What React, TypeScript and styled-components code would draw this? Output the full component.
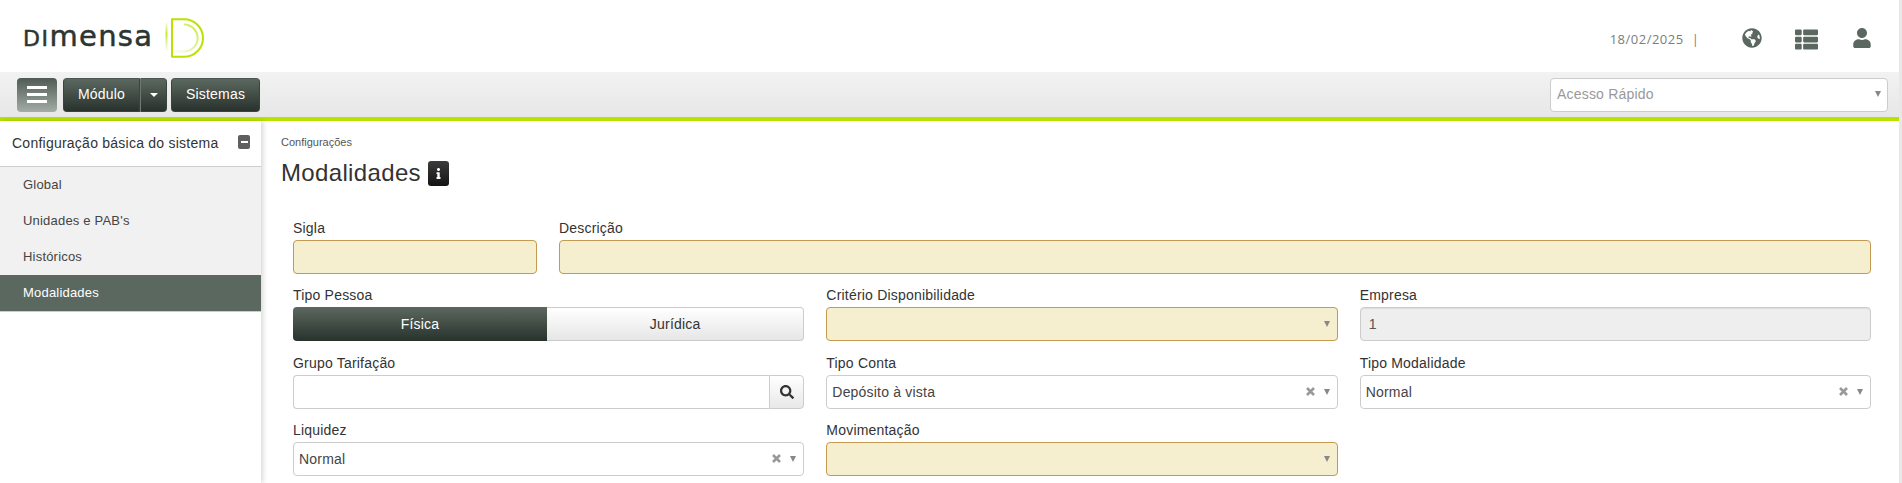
import React from "react";
import styled, { createGlobalStyle } from "styled-components";
import { FaGlobeAmericas, FaThList, FaUser, FaSearch, FaInfo } from "react-icons/fa";

const Global = createGlobalStyle`
  html, body { margin: 0; padding: 0; height: 483px; overflow: hidden; background: #fff; }
  * { box-sizing: border-box; }
  body { font-family: "Liberation Sans", Arial, sans-serif; font-size: 14px; color: #333; letter-spacing: 0.2px; }
`;

const Shell = styled.div`
  display: flex;
  height: 483px;
  overflow: hidden;
`;
const Page = styled.div`
  flex: 1;
  min-width: 0;
  display: flex;
  flex-direction: column;
`;
const ScrollTrack = styled.div`
  width: 3px;
  background: #e8e8e8;
`;

const Header = styled.header`
  height: 72px;
  flex: none;
  display: flex;
  align-items: center;
  justify-content: space-between;
  padding: 0 10px 0 23px;
  background: #fff;
`;
const Brand = styled.div`
  display: flex;
  align-items: center;
  gap: 12px;
  margin-top: 3px;
`;
const Wordmark = styled.div`
  font-family: "DejaVu Sans", sans-serif;
  font-size: 29px;
  line-height: 30px;
  color: #2d3531;
  letter-spacing: 1.3px;
  -webkit-text-stroke: 0.5px #2d3531;
  white-space: nowrap;
`;
const WordCaps = styled.span`
  font-size: 22px;
  letter-spacing: 1.5px;
`;
const HeaderRight = styled.div`
  display: flex;
  align-items: center;
  padding-top: 5px;
`;
const DateText = styled.span`
  font-family: "Open Sans", sans-serif;
  font-size: 13px;
  color: #78807b;
  letter-spacing: 0.5px;
`;
const Pipe = styled.span`
  font-family: "Open Sans", sans-serif;
  font-size: 13px;
  color: #78807b;
  margin: 0 0 0 8px;
`;
const IconSlot = styled.span`
  width: 55px;
  display: flex;
  justify-content: center;
  color: #5b685f;
  font-size: ${(p: { $size: number }) => p.$size}px;
  margin-top: 1px;
`;
const IconRow = styled.div`
  display: flex;
  margin-left: 25px;
`;

const Toolbar = styled.div`
  height: 45px;
  flex: none;
  display: flex;
  align-items: center;
  padding: 0 11px 0 17px;
  background: linear-gradient(#f2f2f2, #e7e7e7);
`;
const Hamburger = styled.button`
  width: 40px;
  height: 34px;
  padding: 0;
  border: 0;
  border-radius: 4px;
  background: linear-gradient(#4e5b53, #a3ada6);
  display: flex;
  flex-direction: column;
  align-items: center;
  justify-content: center;
  gap: 4px;
  margin-right: 6px;
`;
const BurgerBar = styled.span`
  width: 20px;
  height: 3px;
  background: #fff;
`;
const DarkButton = styled.button`
  height: 34px;
  border: 1px solid #3a433e;
  border-top-color: #4b5750;
  background: linear-gradient(#5b685f, #29322d);
  color: #fff;
  font: 14px "Liberation Sans", Arial, sans-serif;
  letter-spacing: 0.2px;
  padding: 0 0 2px;
  width: ${(p: { $w: number; $side?: string }) => p.$w}px;
  border-radius: ${(p: { $w: number; $side?: string }) =>
    p.$side === "left" ? "4px 0 0 4px" : p.$side === "right" ? "0 4px 4px 0" : "4px"};
  border-left-color: ${(p: { $w: number; $side?: string }) => (p.$side === "right" ? "#6d7a71" : "#3a433e")};
`;
const ButtonGroup = styled.div`
  display: flex;
  margin-right: 4px;
`;
const Caret = styled.span`
  display: inline-block;
  width: 0;
  height: 0;
  border-left: 4px solid transparent;
  border-right: 4px solid transparent;
  border-top: 4px solid #fff;
  vertical-align: middle;
`;
const QuickAccess = styled.div`
  margin-left: auto;
  width: 338px;
  height: 34px;
  border: 1px solid #ccc;
  border-radius: 4px;
  background: #fff;
  color: #999;
  display: flex;
  align-items: center;
  justify-content: space-between;
  padding: 0 6px 2px 6px;
`;
const Arrow = styled.span`
  width: 0;
  height: 0;
  flex: none;
  border-left: 3.5px solid transparent;
  border-right: 3.5px solid transparent;
  border-top: 6px solid #888;
`;
const GreenLine = styled.div`
  height: 4px;
  flex: none;
  background: #b9e200;
`;

const Body = styled.div`
  flex: 1;
  min-height: 0;
  display: flex;
`;
const Sidebar = styled.aside`
  width: 261px;
  flex: none;
  box-shadow: 2px 0 5px rgba(0, 0, 0, 0.16);
  position: relative;
  background: #fff;
`;
const SideTitle = styled.div`
  height: 46px;
  display: flex;
  align-items: center;
  justify-content: space-between;
  padding: 0 11px 1px 12px;
  border-bottom: 1px solid #ccc;
  font-size: 14px;
  color: #333;
  letter-spacing: 0.24px;
`;
const Collapse = styled.span`
  width: 12px;
  height: 14px;
  margin-bottom: 2px;
  border-radius: 2px;
  background: #5f5f5f;
  display: flex;
  align-items: center;
  justify-content: center;
`;
const CollapseDash = styled.span`
  width: 7px;
  height: 2px;
  background: #fff;
`;
const SideItem = styled.div`
  height: 36px;
  display: flex;
  align-items: center;
  padding: 0 0 2px 23px;
  font-size: 13px;
  background: ${(p: { $active?: boolean }) => (p.$active ? "#5b685f" : "#f1f1f1")};
  color: ${(p: { $active?: boolean }) => (p.$active ? "#fff" : "#444")};
`;
const SideEnd = styled.div`
  height: 1px;
  background: #ccc;
`;

const Main = styled.main`
  flex: 1;
  min-width: 0;
  padding: 14px 28px 0 20px;
`;
const Crumb = styled.div`
  font-size: 11px;
  line-height: 14px;
  letter-spacing: 0;
  color: #555;
`;
const TitleRow = styled.div`
  display: flex;
  align-items: center;
  gap: 7px;
  height: 36px;
  margin-top: 6px;
`;
const Title = styled.h1`
  margin: 0;
  font-size: 24px;
  font-weight: 400;
  letter-spacing: 0.35px;
  color: #333;
`;
const InfoBadge = styled.span`
  width: 21px;
  height: 25px;
  border-radius: 3px;
  background: linear-gradient(#3c3c3c, #141414);
  color: #fff;
  display: flex;
  align-items: center;
  justify-content: center;
  font-size: 11px;
`;
const Form = styled.form`
  margin: 29px 0 0 12px;
  display: flex;
  flex-direction: column;
  gap: 13.33px;
`;
const Row = styled.div`
  display: grid;
  grid-template-columns: ${(p: { $cols: string }) => p.$cols};
  column-gap: 22px;
`;
const Label = styled.label`
  display: block;
  height: 20px;
  line-height: 16.6px;
  font-size: 14px;
  color: #333;
`;
const TextBox = styled.div`
  height: 34px;
  border: 1px solid ${(p: { $tone?: string }) => (p.$tone === "req" ? "#c49a50" : "#ccc")};
  border-radius: 4px;
  background: ${(p: { $tone?: string }) =>
    p.$tone === "req" ? "#f5efcf" : p.$tone === "off" ? "#eee" : "#fff"};
  color: ${(p: { $tone?: string }) => (p.$tone === "off" ? "#555" : "#444")};
  box-shadow: ${(p: { $tone?: string }) =>
    p.$tone === "off" ? "inset 0 1px 1px rgba(0,0,0,.075)" : "none"};
  display: flex;
  align-items: center;
  padding: 0 ${(p: { $tone?: string }) => (p.$tone === "off" ? "8px" : "7px")} 0 ${(p: { $tone?: string }) => (p.$tone === "off" ? "8px" : "5px")};
  font-size: 14px;
`;
const SelectValue = styled.span`
  flex: 1;
`;
const ClearIcon = styled.svg`
  width: 9px;
  height: 9px;
  margin-right: 9px;
  stroke: #999;
  stroke-width: 2.6;
  fill: none;
`;
const Segmented = styled.div`
  height: 34px;
  display: grid;
  grid-template-columns: 254px 1fr;
`;
const SegOn = styled.div`
  border-radius: 4px 0 0 4px;
  background: linear-gradient(#5b685f, #29322d);
  color: #fff;
  display: flex;
  align-items: center;
  justify-content: center;
`;
const SegOff = styled.div`
  border: 1px solid #ccc;
  border-left: 0;
  border-radius: 0 4px 4px 0;
  background: linear-gradient(#fff, #e6e6e6);
  color: #333;
  display: flex;
  align-items: center;
  justify-content: center;
`;
const SearchGroup = styled.div`
  display: flex;
  height: 34px;
`;
const SearchInput = styled.div`
  flex: 1;
  border: 1px solid #ccc;
  border-right: 0;
  border-radius: 4px 0 0 4px;
  background: #fff;
`;
const SearchButton = styled.div`
  width: 35px;
  border: 1px solid #ccc;
  border-radius: 0 4px 4px 0;
  background: linear-gradient(#fff, #e8e8e8);
  color: #333;
  display: flex;
  align-items: center;
  justify-content: center;
  font-size: 14px;
`;

function DimensaMark() {
  return (
    <svg width="40" height="40" viewBox="0 0 40 40" fill="none" aria-hidden="true">
      <defs>
        <linearGradient id="bar" x1="0" y1="0" x2="0" y2="1">
          <stop offset="0" stopColor="#b9e200" stopOpacity="0.05" />
          <stop offset="0.4" stopColor="#b9e200" stopOpacity="0.8" />
          <stop offset="1" stopColor="#b9e200" stopOpacity="0" />
        </linearGradient>
        <linearGradient id="inner" x1="0" y1="1" x2="1" y2="0">
          <stop offset="0" stopColor="#b9e200" stopOpacity="0.05" />
          <stop offset="1" stopColor="#b9e200" stopOpacity="0.75" />
        </linearGradient>
      </defs>
      <rect x="0.5" y="4" width="2" height="30" fill="url(#bar)" />
      <path d="M7 1.2H19C29.5 1.2 38 9.6 38 20C38 30.4 29.5 38.8 19 38.8H7Z" stroke="#b9e200" strokeWidth="2" strokeLinejoin="round" />
      <path d="M19 6.5C26.6 6.5 32.6 12.6 32.6 20C32.6 27.4 26.6 33.5 19 33.5H9" stroke="url(#inner)" strokeWidth="2" />
    </svg>
  );
}

function SelectBox({ value, clear, tone }: { value?: string; clear?: boolean; tone?: string }) {
  return (
    <TextBox $tone={tone}>
      <SelectValue>{value}</SelectValue>
      {clear && (
        <ClearIcon viewBox="0 0 9 9" aria-hidden="true">
          <path d="M1 1L8 8M8 1L1 8" />
        </ClearIcon>
      )}
      <Arrow />
    </TextBox>
  );
}

const menu = ["Global", "Unidades e PAB's", "Históricos", "Modalidades"];

export default function App() {
  return (
    <Shell>
      <Global />
      <Page>
        <Header>
          <Brand>
            <Wordmark>
              <WordCaps>DI</WordCaps>mensa
            </Wordmark>
            <DimensaMark />
          </Brand>
          <HeaderRight>
            <DateText>18/02/2025</DateText>
            <Pipe>|</Pipe>
            <IconRow>
              <IconSlot $size={20}><FaGlobeAmericas /></IconSlot>
              <IconSlot $size={23}><FaThList /></IconSlot>
              <IconSlot $size={20}><FaUser /></IconSlot>
            </IconRow>
          </HeaderRight>
        </Header>
        <Toolbar>
          <Hamburger aria-label="Menu">
            <BurgerBar />
            <BurgerBar />
            <BurgerBar />
          </Hamburger>
          <ButtonGroup>
            <DarkButton $w={77} $side="left">Módulo</DarkButton>
            <DarkButton $w={27} $side="right"><Caret /></DarkButton>
          </ButtonGroup>
          <DarkButton $w={89}>Sistemas</DarkButton>
          <QuickAccess>
            Acesso Rápido
            <Arrow />
          </QuickAccess>
        </Toolbar>
        <GreenLine />
        <Body>
          <Sidebar>
            <SideTitle>
              Configuração básica do sistema
              <Collapse><CollapseDash /></Collapse>
            </SideTitle>
            {menu.map((m) => (
              <SideItem key={m} $active={m === "Modalidades"}>{m}</SideItem>
            ))}
            <SideEnd />
          </Sidebar>
          <Main>
            <Crumb>Configurações</Crumb>
            <TitleRow>
              <Title>Modalidades</Title>
              <InfoBadge><FaInfo /></InfoBadge>
            </TitleRow>
            <Form>
              <Row $cols="244px 1fr">
                <div>
                  <Label>Sigla</Label>
                  <TextBox $tone="req" />
                </div>
                <div>
                  <Label>Descrição</Label>
                  <TextBox $tone="req" />
                </div>
              </Row>
              <Row $cols="repeat(3, 1fr)">
                <div>
                  <Label>Tipo Pessoa</Label>
                  <Segmented>
                    <SegOn>Física</SegOn>
                    <SegOff>Jurídica</SegOff>
                  </Segmented>
                </div>
                <div>
                  <Label>Critério Disponibilidade</Label>
                  <SelectBox tone="req" />
                </div>
                <div>
                  <Label>Empresa</Label>
                  <TextBox $tone="off">1</TextBox>
                </div>
              </Row>
              <Row $cols="repeat(3, 1fr)">
                <div>
                  <Label>Grupo Tarifação</Label>
                  <SearchGroup>
                    <SearchInput />
                    <SearchButton><FaSearch /></SearchButton>
                  </SearchGroup>
                </div>
                <div>
                  <Label>Tipo Conta</Label>
                  <SelectBox value="Depósito à vista" clear />
                </div>
                <div>
                  <Label>Tipo Modalidade</Label>
                  <SelectBox value="Normal" clear />
                </div>
              </Row>
              <Row $cols="repeat(3, 1fr)">
                <div>
                  <Label>Liquidez</Label>
                  <SelectBox value="Normal" clear />
                </div>
                <div>
                  <Label>Movimentação</Label>
                  <SelectBox tone="req" />
                </div>
              </Row>
            </Form>
          </Main>
        </Body>
      </Page>
      <ScrollTrack />
    </Shell>
  );
}
